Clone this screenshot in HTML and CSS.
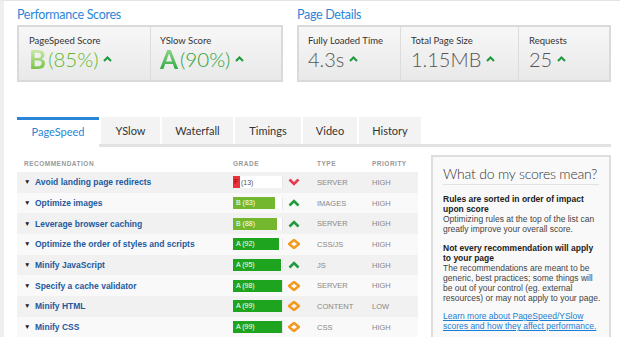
FILE: index.html
```html
<!DOCTYPE html>
<html>
<head>
    <meta charset="UTF-8">
    <title>Performance Report</title>
<link rel="stylesheet" href="styles.css">
</head>
<body>
  <div class="page">
    <div class="summary">
      <div class="summary-block scores">
        <h2>Performance Scores</h2>
        <div class="box">
          <div class="cell cell-ps">
            <div class="cell-label">PageSpeed Score</div>
            <div class="cell-value"><span class="letter letter-b">B</span><span class="pct pct-b">(85%)</span>
              <svg class="caret" width="9" height="6" viewBox="0 0 9 6"><path d="M1 5 L4.5 1.5 L8 5" fill="none" stroke="#1a9a3a" stroke-width="2"/></svg></div>
          </div>
          <div class="cell cell-ys">
            <div class="cell-label">YSlow Score</div>
            <div class="cell-value"><span class="letter letter-a">A</span><span class="pct pct-a">(90%)</span>
              <svg class="caret" width="9" height="6" viewBox="0 0 9 6"><path d="M1 5 L4.5 1.5 L8 5" fill="none" stroke="#1a9a3a" stroke-width="2"/></svg></div>
          </div>
        </div>
      </div>
      <div class="summary-block details">
        <h2>Page Details</h2>
        <div class="box">
          <div class="cell cell-time">
            <div class="cell-label">Fully Loaded Time</div>
            <div class="cell-value"><span class="num">4.3s</span>
              <svg class="caret" width="9" height="6" viewBox="0 0 9 6"><path d="M1 5 L4.5 1.5 L8 5" fill="none" stroke="#1a9a3a" stroke-width="2"/></svg></div>
          </div>
          <div class="cell cell-size">
            <div class="cell-label">Total Page Size</div>
            <div class="cell-value"><span class="num">1.15MB</span>
              <svg class="caret" width="9" height="6" viewBox="0 0 9 6"><path d="M1 5 L4.5 1.5 L8 5" fill="none" stroke="#1a9a3a" stroke-width="2"/></svg></div>
          </div>
          <div class="cell cell-req">
            <div class="cell-label">Requests</div>
            <div class="cell-value"><span class="num">25</span>
              <svg class="caret" width="9" height="6" viewBox="0 0 9 6"><path d="M1 5 L4.5 1.5 L8 5" fill="none" stroke="#1a9a3a" stroke-width="2"/></svg></div>
          </div>
        </div>
      </div>
    </div>

    <div class="tabs">
      <div class="tab active t1">PageSpeed</div>
      <div class="tab t2">YSlow</div>
      <div class="tab t3">Waterfall</div>
      <div class="tab t4">Timings</div>
      <div class="tab t5">Video</div>
      <div class="tab t6">History</div>
    </div>

    <div class="main">
      <div class="report">
        <div class="thead">
          <div class="c-rec">Recommendation</div>
          <div class="c-grade">Grade</div>
          <div class="c-type">Type</div>
          <div class="c-pri">Priority</div>
        </div>

        <div class="row">
          <div class="c-rec"><span class="tri">&#9660;</span>Avoid landing page redirects</div>
          <div class="c-grade"><div class="bar"><div class="fill fill-f" style="width: 7px">F</div><span class="bar-dark">(13)</span></div>
            <svg class="ico" width="12" height="8" viewBox="0 0 12 8"><path d="M1.5 1.5 L6 6 L10.5 1.5" fill="none" stroke="#e8384f" stroke-width="2.6"/></svg></div>
          <div class="c-type">Server</div>
          <div class="c-pri">High</div>
        </div>
        <div class="row">
          <div class="c-rec"><span class="tri">&#9660;</span>Optimize images</div>
          <div class="c-grade"><div class="bar"><div class="fill fill-b" style="width: 42px">B (83)</div></div>
            <svg class="ico" width="12" height="8" viewBox="0 0 12 8"><path d="M1.5 6.5 L6 2 L10.5 6.5" fill="none" stroke="#1f9a3c" stroke-width="2.6"/></svg></div>
          <div class="c-type">Images</div>
          <div class="c-pri">High</div>
        </div>
        <div class="row">
          <div class="c-rec"><span class="tri">&#9660;</span>Leverage browser caching</div>
          <div class="c-grade"><div class="bar"><div class="fill fill-b" style="width: 44px">B (88)</div></div>
            <svg class="ico" width="12" height="8" viewBox="0 0 12 8"><path d="M1.5 6.5 L6 2 L10.5 6.5" fill="none" stroke="#1f9a3c" stroke-width="2.6"/></svg></div>
          <div class="c-type">Server</div>
          <div class="c-pri">High</div>
        </div>
        <div class="row">
          <div class="c-rec"><span class="tri">&#9660;</span>Optimize the order of styles and scripts</div>
          <div class="c-grade"><div class="bar"><div class="fill fill-a" style="width: 46px">A (92)</div></div>
            <svg class="ico" width="12" height="10" viewBox="0 0 12 10"><path d="M6 1 L11 5 L6 9 L1 5 Z" fill="none" stroke="#f39a1e" stroke-width="2.6"/></svg></div>
          <div class="c-type">CSS/JS</div>
          <div class="c-pri">High</div>
        </div>
        <div class="row">
          <div class="c-rec"><span class="tri">&#9660;</span>Minify JavaScript</div>
          <div class="c-grade"><div class="bar"><div class="fill fill-a" style="width: 48px">A (95)</div></div>
            <svg class="ico" width="12" height="8" viewBox="0 0 12 8"><path d="M1.5 6.5 L6 2 L10.5 6.5" fill="none" stroke="#1f9a3c" stroke-width="2.6"/></svg></div>
          <div class="c-type">JS</div>
          <div class="c-pri">High</div>
        </div>
        <div class="row">
          <div class="c-rec"><span class="tri">&#9660;</span>Specify a cache validator</div>
          <div class="c-grade"><div class="bar"><div class="fill fill-a" style="width: 49px">A (98)</div></div>
            <svg class="ico" width="12" height="10" viewBox="0 0 12 10"><path d="M6 1 L11 5 L6 9 L1 5 Z" fill="none" stroke="#f39a1e" stroke-width="2.6"/></svg></div>
          <div class="c-type">Server</div>
          <div class="c-pri">High</div>
        </div>
        <div class="row">
          <div class="c-rec"><span class="tri">&#9660;</span>Minify HTML</div>
          <div class="c-grade"><div class="bar"><div class="fill fill-a" style="width: 50px">A (99)</div></div>
            <svg class="ico" width="12" height="10" viewBox="0 0 12 10"><path d="M6 1 L11 5 L6 9 L1 5 Z" fill="none" stroke="#f39a1e" stroke-width="2.6"/></svg></div>
          <div class="c-type">Content</div>
          <div class="c-pri">Low</div>
        </div>
        <div class="row">
          <div class="c-rec"><span class="tri">&#9660;</span>Minify CSS</div>
          <div class="c-grade"><div class="bar"><div class="fill fill-a" style="width: 50px">A (99)</div></div>
            <svg class="ico" width="12" height="10" viewBox="0 0 12 10"><path d="M6 1 L11 5 L6 9 L1 5 Z" fill="none" stroke="#f39a1e" stroke-width="2.6"/></svg></div>
          <div class="c-type">CSS</div>
          <div class="c-pri">High</div>
        </div>
      </div>

      <div class="panel">
        <h3>What do my scores mean?</h3>
        <p><b>Rules are sorted in order of impact upon score</b>
          Optimizing rules at the top of the list can greatly improve your overall score.</p>
        <p><b>Not every recommendation will apply to your page</b>
          The recommendations are meant to be generic, best practices; some things will be out of your control (eg. external resources) or may not apply to your page.</p>
        <p><a href="#">Learn more about PageSpeed/YSlow scores and how they affect performance.</a></p>
      </div>
    </div>
  </div>
</body>
</html>
```

FILE: styles.css
```css
body {
  margin: 0;
  background-color: #fff;
  font-family: "Liberation Sans", Arial, sans-serif;
  overflow: hidden;
}

.page {
  height: 337px;
  border-left: 4px solid #efefef;
  border-top: 1px solid #e4e4e4;
  padding: 0 9px 0 13px;
  box-sizing: border-box;
}

.summary {
  display: flex;
  gap: 14px;
  padding-top: 6px;
}

.summary h2 {
  margin: 0 0 2px 0;
  height: 16px;
  font-family: Lato, sans-serif;
  font-weight: normal;
  font-size: 12.5px;
  letter-spacing: -0.3px;
  line-height: 16px;
  color: #2a86d8;
}

.scores {
  width: 266px;
}

.details {
  width: 314px;
}

.box {
  display: flex;
  height: 57px;
  box-sizing: border-box;
  border: 2px solid #dadada;
  background: linear-gradient(#f7f7f7, #e9e9e9);
}

.cell {
  padding: 8px 0 0 10px;
  border-right: 1px solid #dcdcdc;
  box-sizing: border-box;
}

.cell:last-child {
  border-right: none;
}

.cell-ps { width: 132px; }
.cell-ys { flex: 1; padding-left: 9px; }
.cell-time { width: 102px; padding-left: 9px; }
.cell-size { width: 118px; }
.cell-req { flex: 1; }

.cell-label {
  font-family: Lato, sans-serif;
  font-size: 9.5px;
  line-height: 12px;
  color: #333;
}

.cell-value {
  display: flex;
  align-items: center;
  height: 24px;
  font-family: Lato, sans-serif;
}

.letter {
  font-size: 26px;
  font-weight: bold;
  line-height: 24px;
  -webkit-background-clip: text;
  background-clip: text;
  color: transparent;
}

.letter-b {
  background-image: linear-gradient(#d8efb8, #6fbf3a);
}

.letter-a {
  background-image: linear-gradient(#9ad98a, #2aa845);
}

.pct {
  font-size: 20.5px;
  font-weight: 300;
  line-height: 24px;
  margin-left: 2px;
}

.pct-b { color: #5cb82c; }
.pct-a { color: #2aa43a; }

.num {
  font-size: 20px;
  font-weight: 300;
  line-height: 24px;
  color: #555;
}

.caret {
  margin-left: 5px;
}

.tabs {
  display: flex;
  margin-top: 35px;
  height: 27px;
  border-bottom: 3px solid #e2e2e2;
}

.tab {
  margin-right: 2px;
  background-color: #f3f3f3;
  font-family: Lato, sans-serif;
  font-size: 11px;
  line-height: 27px;
  text-align: center;
  color: #333;
  box-sizing: border-box;
}

.tab.active {
  background-color: #fff;
  border-top: 3px solid #2a86d8;
  line-height: 24px;
  color: #2a86d8;
  height: 30px;
}

.t1 { width: 82px; }
.t2 { width: 59px; }
.t3 { width: 71px; }
.t4 { width: 66px; }
.t5 { width: 54px; }
.t6 { width: 62px; }

.main {
  display: flex;
  gap: 13px;
}

.report {
  width: 401px;
  padding-top: 8px;
}

.thead,
.row {
  display: flex;
  align-items: center;
}

.thead {
  height: 17px;
  font-size: 6.5px;
  font-weight: bold;
  letter-spacing: 0.5px;
  color: #999;
  text-transform: uppercase;
}

.c-rec {
  width: 216px;
  padding-left: 7px;
  box-sizing: border-box;
}

.c-grade {
  width: 84px;
  display: flex;
  align-items: center;
}

.c-type {
  width: 55px;
}

.c-pri {
  flex: 1;
}

.row {
  height: 20.7px;
  font-size: 7.5px;
  color: #888;
  text-transform: uppercase;
}

.row:nth-child(even) {
  background-color: #f1f1f1;
}

.row:nth-child(odd) {
  background-color: #f9f9f9;
}

.row .c-rec {
  padding-left: 7px;
  font-size: 8.5px;
  font-weight: bold;
  color: #1d5a9e;
  text-transform: none;
}

.tri {
  display: inline-block;
  width: 11px;
  font-size: 6.5px;
  color: #222;
  vertical-align: 1px;
}

.bar {
  display: flex;
  align-items: center;
  width: 50px;
  height: 12px;
  background-color: #fff;
  border-right: 1px solid #e6e6e6;
  box-sizing: border-box;
}

.fill {
  height: 12px;
  font-size: 7px;
  line-height: 12px;
  color: #fff;
  padding-left: 3px;
  box-sizing: border-box;
  white-space: nowrap;
  overflow: hidden;
}

.fill-f {
  padding-left: 1px;
  background-color: #e8323c;
  color: #8a1010;
}

.fill-b { background-color: #72b72e; }
.fill-a { background-color: #1ea41e; }

.bar-dark {
  margin-left: 1px;
  font-size: 7px;
  color: #555;
}

.ico {
  margin-left: 5px;
}

.panel {
  width: 180px;
  margin-top: 8px;
  height: 200px;
  padding: 8px 8px 0 10px;
  box-sizing: border-box;
  border: 2px solid #dedede;
  background-color: #f9f9f9;
}

.panel h3 {
  margin: 0 2px 9px 0;
  padding-bottom: 1px;
  border-bottom: 1px solid #e2e2e2;
  font-family: Lato, sans-serif;
  font-weight: 300;
  font-size: 14px;
  letter-spacing: -0.2px;
  line-height: 18px;
  color: #333;
  white-space: nowrap;
}

.panel p {
  margin: 0 0 8.5px 0;
  font-size: 8.5px;
  line-height: 10px;
  color: #444;
}

.panel b {
  display: block;
  color: #222;
}

.panel a {
  color: #1a7fd4;
}
```
